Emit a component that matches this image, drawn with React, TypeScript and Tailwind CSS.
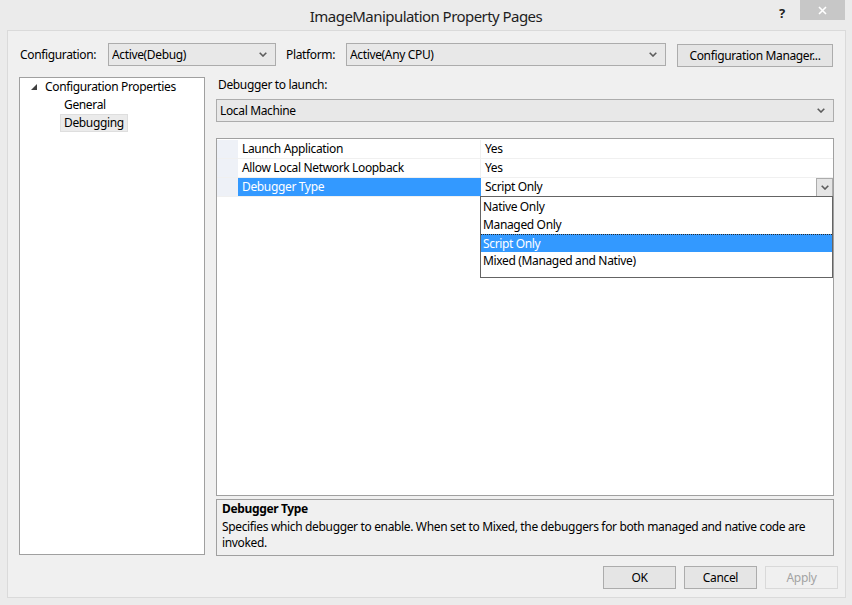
import React from 'react';

const Chevron: React.FC = () => (
  <svg width="8" height="5" viewBox="0 0 8 5" className="shrink-0">
    <path d="M0.7 0.7 L4 4 L7.3 0.7" fill="none" stroke="#5c5c5c" strokeWidth="1.6" />
  </svg>
);

const Select: React.FC<{ value: string; className?: string }> = ({ value, className = '' }) => (
  <div className={`flex items-center h-[23px] border border-[#acacac] bg-[#e8e8e8] pl-[3px] pr-[8px] ${className}`}>
    <span className="flex-1 truncate">{value}</span>
    <Chevron />
  </div>
);

const Button: React.FC<{ label: string; disabled?: boolean; className?: string }> = ({ label, disabled, className = '' }) => (
  <div
    className={`flex items-center justify-center h-[23px] border ${
      disabled ? 'border-[#d9d9d9] bg-[#f0f0f0] text-[#a3a3a3]' : 'border-[#acacac] bg-[#e5e5e5] text-black'
    } ${className}`}
  >
    {label}
  </div>
);

const PropRow: React.FC<{ name: string; value: string; selected?: boolean; children?: React.ReactNode }> = ({
  name,
  value,
  selected,
  children,
}) => (
  <div className="flex h-[19px] border-b border-[#f0f0f0]">
    <div className="w-[21px] bg-[#eef1f7]" />
    <div
      className={`w-[243px] pl-[4px] flex items-center ${
        selected ? 'bg-[#3399ff] text-white' : 'border-r border-[#f0f0f0]'
      }`}
    >
      {name}
    </div>
    <div className="flex-1 pl-[4px] flex items-center">
      <span className="flex-1">{value}</span>
      {children}
    </div>
  </div>
);

const options = ['Native Only', 'Managed Only', 'Script Only', 'Mixed (Managed and Native)'];

export default function App() {
  return (
    <div className="w-[852px] h-[605px] bg-[#ebebeb] flex flex-col overflow-hidden font-['Noto_Sans',sans-serif] text-[12px] tracking-[-0.35px] text-black leading-[16px]">
      {/* title bar */}
      <div className="relative h-[30px] flex items-center justify-center">
        <span className="text-[15px] tracking-[-0.55px] text-[#1e1e1e] pt-[2px]">ImageManipulation Property Pages</span>
        <div className="absolute right-[7px] top-0 flex items-start">
          <span className="w-[20px] pt-[5px] text-[13px] font-bold text-[#222] text-center">?</span>
          <div className="ml-[8px] w-[45px] h-[20px] bg-[#c7c7c7] flex items-center justify-center">
            <svg width="9" height="9" viewBox="0 0 9 9">
              <path d="M1 1 L8 8 M8 1 L1 8" stroke="#fff" strokeWidth="1.6" />
            </svg>
          </div>
        </div>
      </div>

      {/* client area */}
      <div className="ml-[7px] w-[839px] h-[568px] border border-[#dadada] bg-[#f0f0f0] flex flex-col px-[11px] pt-[12px]">
        <div className="flex items-start h-[23px]">
          <div className="w-[89px] h-[23px] pl-[1px] flex items-center">Configuration:</div>
          <Select value="Active(Debug)" className="w-[168px]" />
          <div className="ml-[10px] w-[60px] h-[23px] flex items-center">Platform:</div>
          <Select value="Active(Any CPU)" className="w-[320px]" />
          <Button label="Configuration Manager..." className="ml-[11px] w-[156px] mt-[1px]" />
        </div>

        <div className="flex gap-[11px] mt-[11px] h-[479px]">
          {/* tree */}
          <div className="w-[186px] h-[478px] bg-white border border-[#a0a0a0] flex flex-col">
            <div className="h-[18px] flex items-center pl-[11px]">
              <svg width="6" height="6" viewBox="0 0 6 6" className="mr-[8px]">
                <polygon points="6,0 6,6 0,6" fill="#404040" />
              </svg>
              <span>Configuration Properties</span>
            </div>
            <div className="h-[18px] flex items-center pl-[44px]">General</div>
            <div className="h-[18px] flex items-center pl-[40px]">
              <span className="h-[18px] px-[3px] flex items-center bg-[#ebebeb] border border-[#dedede]">Debugging</span>
            </div>
          </div>

          {/* right column */}
          <div className="flex-1 flex flex-col">
            <div className="h-[22px] pl-[2px]">Debugger to launch:</div>
            <Select value="Local Machine" className="w-full" />

            <div className="relative mt-[16px] h-[358px] border border-[#a0a0a0] bg-white">
              <div className="h-[1px]" />
              <PropRow name="Launch Application" value="Yes" />
              <PropRow name="Allow Local Network Loopback" value="Yes" />
              <PropRow name="Debugger Type" value="Script Only" selected>
                <div className="w-[17px] h-[19px] mt-[1px] border border-[#acacac] bg-[#e5e5e5] flex items-center justify-center">
                  <Chevron />
                </div>
              </PropRow>

              <div className="absolute left-[263px] top-[57px] w-[353px] h-[82px] border border-[#646464] bg-white pt-[1px]">
                {options.map((o) => (
                  <div
                    key={o}
                    className={`h-[18px] pl-[2px] flex items-center ${
                      o === 'Script Only' ? 'bg-[#3399ff] text-white border-t border-dotted border-[#2a2a2a]' : ''
                    }`}
                  >
                    {o}
                  </div>
                ))}
              </div>
            </div>

            <div className="mt-[3px] h-[57px] border border-[#a0a0a0] bg-[#f0f0f0] pl-[5px] pt-[1px]">
              <div className="font-bold">Debugger Type</div>
              <div className="mt-[2px] pr-[8px]">
                Specifies which debugger to enable. When set to Mixed, the debuggers for both managed and native code are invoked.
              </div>
            </div>
          </div>
        </div>

        <div className="flex justify-end gap-[8px] mt-[10px] -mr-[4px]">
          <Button label="OK" className="w-[73px]" />
          <Button label="Cancel" className="w-[73px]" />
          <Button label="Apply" disabled className="w-[73px]" />
        </div>
      </div>
    </div>
  );
}
